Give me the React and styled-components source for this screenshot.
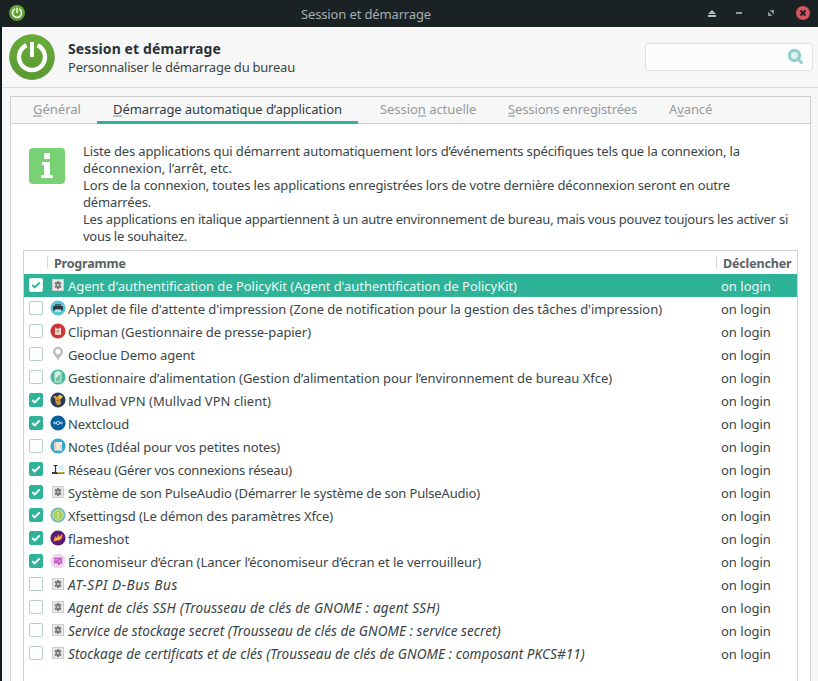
import React from 'react';
import styled, { createGlobalStyle, css } from 'styled-components';

const GlobalStyle = createGlobalStyle`
  * { box-sizing: border-box; }
  html, body { margin: 0; height: 681px; overflow: hidden; }
  body {
    background: #f7f7f7;
    color: #3a4548;
    font: 13px/17px "Noto Sans", "Open Sans", sans-serif;
  }
`;

const Text = styled.span`
  display: block;
  white-space: pre;
  letter-spacing: ${(p) => p.$track || 0}px;
`;

const Window = styled.div`
  display: flex;
  flex-direction: column;
  width: 818px;
  height: 681px;
  overflow: hidden;
  background: #f7f7f7;
`;

const TitleBar = styled.header`
  display: grid;
  grid-template-columns: 301px 1fr auto;
  align-items: center;
  flex: none;
  height: 27px;
  padding: 0 8px 0 0;
  background: #1b2224;
  color: #a5adb2;
`;

const TitleIcon = styled.div`
  display: flex;
  padding-left: 9px;
  margin-top: -1px;
`;

const TitleText = styled(Text)`
  padding-top: 2px;
`;

const WindowControls = styled.svg`
  display: block;
  width: 106px;
  height: 27px;
`;

const Body = styled.div`
  display: flex;
  flex-direction: column;
  flex: 1;
  min-height: 0;
  border-left: 2px solid #101a1e;
`;

const Heading = styled.section`
  display: flex;
  align-items: center;
  flex: none;
  height: 61px;
  padding: 0 5px 0 7px;
  border-bottom: 1px solid #dcdcdc;
`;

const HeadingText = styled.div`
  flex: 1;
  padding: 1px 0 0 13px;
`;

const Name = styled(Text)`
  color: #293236;
  font-size: 14px;
  font-weight: 700;
  line-height: 19px;
`;

const Summary = styled(Text)`
  line-height: 19px;
`;

const Search = styled.div`
  display: flex;
  align-items: center;
  justify-content: flex-end;
  width: 168px;
  height: 28px;
  margin-top: -1px;
  padding-right: 8px;
  border: 1px solid #e1e1e1;
  border-radius: 3px;
  background: #fcfcfc;
`;

const Notebook = styled.main`
  display: flex;
  flex-direction: column;
  flex: 1;
  min-height: 0;
  margin: 8px 7px 0 8px;
  border: 1px solid #cfcfcf;
  border-bottom: 0;
  background: #fff;
`;

const Tabs = styled.nav`
  display: flex;
  gap: 6px;
  flex: none;
  height: 27px;
  padding-left: 6px;
  background: #f7f7f7;
  box-shadow: inset 0 -1px #cfcfcf;
`;

const Tab = styled.div`
  width: ${(p) => p.$width}px;
  padding: 4px 0 0 16px;
  color: #959a9c;
  ${(p) => p.$active && css`
    color: #333e41;
    border-bottom: 3px solid #2eb398;
  `}
`;

const Mnemonic = styled.span`
  background: linear-gradient(#bfc2c3, #bfc2c3) 0 15px / 100% 2px no-repeat;
`;

const Notice = styled.section`
  display: flex;
  flex: none;
  height: 126px;
  padding: 19px 0 0 18px;
`;

const NoticeIcon = styled.svg`
  flex: none;
  width: 36px;
  height: 36px;
  margin: 5px 18px 0 0;
`;

const Table = styled.section`
  flex: 1;
  margin: 0 12px;
  border: 1px solid #d3d3d3;
  border-bottom: 0;
`;

const TableHead = styled.div`
  display: grid;
  grid-template-columns: 23px 669px 1fr;
  align-items: center;
  height: 23px;
  color: #596164;
  font-size: 12.5px;
  font-weight: 700;
`;

const HeadCell = styled.div`
  height: 13px;
  padding-left: 6px;
  border-left: ${(p) => (p.$plain ? 0 : '1px solid #d9dbdb')};
  line-height: 15px;
`;

const Row = styled.div`
  display: grid;
  grid-template-columns: 21px 23px 653px 1fr;
  align-items: center;
  height: 23px;
  color: ${(p) => (p.$selected ? '#eefaf7' : '#3a4548')};
  background: ${(p) => (p.$selected ? '#2eb398' : 'transparent')};
`;

const RowText = styled(Text)`
  padding-top: 1px;
  ${(p) => p.$italic && css`
    padding: 0 0 1px;
    font-style: italic;
    font-size: 13.6px;
    color: #374245;
  `}
`;

const Check = styled.span`
  display: flex;
  width: 14px;
  height: 14px;
  margin: -1px 0 0 5px;
  align-items: center;
  justify-content: center;
  border: 1px solid ${(p) => (p.$on ? '#2eb398' : '#b5cfca')};
  border-radius: 2px;
  background: ${(p) => (p.$on ? '#2eb398' : '#fff')};
  ${(p) => p.$selected && css`
    border: 1px dashed #d4f0ea;
    background: #fff;
  `}
`;

const IconSlot = styled.span`
  display: flex;
  margin: -1px 0 0 5px;
`;

const glyphs = {
  gear: (
    <>
      <rect x="2.5" y="2.5" width="11" height="11" fill="#e9e9e9" stroke="#cdcdcd" />
      <path d="M7 4h2v1.3l1.5-.6 1 1.7L10.4 7.4v1.2l1.1 1-1 1.7-1.5-.6V12H7v-1.3l-1.5.6-1-1.7 1.1-1V7.4l-1.1-1 1-1.7 1.5.6z" fill="#7a7a7a" />
      <circle cx="8" cy="8" r="1.1" fill="#d5d5d5" />
    </>
  ),
  printer: (
    <>
      <circle cx="8" cy="8" r="7.6" fill="#5bc5d3" />
      <path d="M5 4h6v2.5H5z" fill="#486773" />
      <rect x="3" y="6" width="10" height="4.5" rx="1" fill="#263840" />
      <path d="M5 9.3h6V12H5z" fill="#b9dfe7" />
    </>
  ),
  clipboard: (
    <>
      <circle cx="8" cy="8" r="7.6" fill="#d03536" />
      <rect x="5" y="4.7" width="6" height="7" rx=".5" fill="#f1e3d5" />
      <path d="M6.5 4h3v1.7h-3z" fill="#8e4a3c" />
      <path d="M6.5 7h3v2.7h-3z" fill="#cfa097" />
    </>
  ),
  pin: (
    <>
      <path d="M8 .8a5 5 0 0 0-5 5C3 9 7 11 8 15c1-4 5-6 5-9.2a5 5 0 0 0-5-5z" fill="#bdbdbd" />
      <circle cx="8" cy="5.6" r="2.6" fill="#fff" />
    </>
  ),
  battery: (
    <>
      <circle cx="8" cy="8" r="7.6" fill="#4db8a0" />
      <rect x="4.5" y="3" width="7" height="10.5" rx="1" fill="#d6eee5" />
      <path d="M6.5 2h3v1h-3z" fill="#d6eee5" />
      <path d="M5.5 9.5 10.5 5v7.5h-5z" fill="#78c5a9" />
    </>
  ),
  mole: (
    <>
      <circle cx="8" cy="8" r="7" fill="#233b5c" stroke="#1b304d" />
      <path d="m3 4.5 2-.7 2 1 2.5-1 2 2-1.2 1 .5 5.5-3.3 1-2-3-.3-3.3z" fill="#d99838" />
      <path d="M8 4.5c1-2.2 4-1.8 4.6.5l-1.6 2z" fill="#f7cf46" />
      <path d="m6.5 8 2 .3-.2 2z" fill="#79471f" />
    </>
  ),
  cloud: (
    <>
      <circle cx="8" cy="8" r="7.6" fill="#07609f" />
      <g fill="none" stroke="#d9ebf5" strokeWidth=".9">
        <circle cx="8" cy="8" r="1.6" />
        <circle cx="4.6" cy="8" r=".9" />
        <circle cx="11.4" cy="8" r=".9" />
      </g>
    </>
  ),
  notes: (
    <>
      <circle cx="8" cy="8" r="7.6" fill="#39a7cb" />
      <path d="M4 4h8v8.5H4z" fill="#f5eee4" />
      <path d="M4 4h2.5v8.5H4z" fill="#dbcfc1" />
      <path d="M9 7h3v5.5H9z" fill="#e3dace" />
    </>
  ),
  network: (
    <>
      <path d="M8 6.5 13.5 2v9z" fill="#d4eef7" />
      <path d="M3.5 4.5h4M5.5 4v7" stroke="#323232" strokeWidth="1.2" />
      <path d="M2 11h6v2H2z" fill="#3a3a3a" />
      <path d="M8 11h6.5v2H8z" fill="#878776" />
      <path d="M7 11.5h1.5M10 11.5h1M12 11.5h1" stroke="#dfcb43" />
    </>
  ),
  settings: (
    <>
      <circle cx="8" cy="8" r="7.6" fill="#71b9bd" />
      <circle cx="8" cy="8" r="5.2" fill="#a7ce5c" stroke="#d7e3a4" />
      <path d="M8 5v6" stroke="#d0e497" strokeWidth="1.4" />
    </>
  ),
  flame: (
    <>
      <circle cx="8" cy="8" r="7.6" fill="#5b1a73" />
      <path d="M4 12c-.8-2.8.2-4.4 2-6l.3 1.8L9 4v2.5L12.5 4c-.2 2 .4 3.4-1.5 5.3C9 11.5 6 9.8 4 12z" fill="#f18d38" />
      <path d="M5 10.5 6.2 8l1 1L9 6.5v2l2.4-1.8C10.5 9.5 7.5 9.7 5 10.5z" fill="#ffd04a" />
    </>
  ),
  screen: (
    <>
      <circle cx="8" cy="8" r="7.6" fill="#edd5ec" />
      <path d="M4 4.5h8.2v6H10V12H8v-1.5H4z" fill="#c466c4" />
      <path d="M5.3 6h2v1.2h-2zM8.7 7.5h2v1.3h-2z" fill="#e2abe0" />
    </>
  ),
};

function ProgramIcon({ name }) {
  return <svg width="16" height="16" viewBox="0 0 16 16">{glyphs[name]}</svg>;
}

function PowerIcon({ size }) {
  return (
    <svg width={size} height={size} viewBox="0 0 46 46">
      <defs>
        <linearGradient id={`power${size}`} x2="0" y2="1">
          <stop stopColor="#69ad3a" />
          <stop offset="1" stopColor="#5a9831" />
        </linearGradient>
      </defs>
      <circle cx="23" cy="23.3" r="22.7" fill="#447e28" opacity=".65" />
      <circle cx="23" cy="22.8" r="22.6" fill={`url(#power${size})`} />
      <path d="M17.5 11.2a13 13 0 1 0 11 0" fill="none" stroke="#fff" strokeWidth="4.4" />
      <path d="M23 8v15" stroke="#fff" strokeWidth="4" />
    </svg>
  );
}

const tabs = [
  { before: '', key: 'G', after: 'énéral', width: 74, track: 0 },
  { before: '', key: 'D', after: 'émarrage automatique d’application', width: 261, track: -0.09, active: true },
  { before: 'Sessio', key: 'n', after: ' actuelle', width: 122, track: -0.05 },
  { before: '', key: 'S', after: 'essions enregistrées', width: 155, track: -0.13 },
  { before: 'A', key: 'v', after: 'ancé', width: 74, track: -0.1 },
];

const notice = [
  ['Liste des applications qui démarrent automatiquement lors d’événements spécifiques tels que la connexion, la', -0.14],
  ['déconnexion, l’arrêt, etc.', 0],
  ['Lors de la connexion, toutes les applications enregistrées lors de votre dernière déconnexion seront en outre', -0.15],
  ['démarrées.', -0.16],
  ['Les applications en italique appartiennent à un autre environnement de bureau, mais vous pouvez toujours les activer si', -0.231],
  ['vous le souhaitez.', -0.25],
];

const programs = [
  { icon: 'gear', name: "Agent d'authentification de PolicyKit (Agent d'authentification de PolicyKit)", track: -0.039, on: true, selected: true },
  { icon: 'printer', name: "Applet de file d'attente d'impression (Zone de notification pour la gestion des tâches d'impression)", track: -0.049 },
  { icon: 'clipboard', name: 'Clipman (Gestionnaire de presse-papier)', track: -0.064 },
  { icon: 'pin', name: 'Geoclue Demo agent', track: -0.09 },
  { icon: 'battery', name: 'Gestionnaire d’alimentation (Gestion d’alimentation pour l’environnement de bureau Xfce)', track: -0.035 },
  { icon: 'mole', name: 'Mullvad VPN (Mullvad VPN client)', track: 0.02, on: true },
  { icon: 'cloud', name: 'Nextcloud', track: -0.11, on: true },
  { icon: 'notes', name: 'Notes (Idéal pour vos petites notes)', track: -0.133 },
  { icon: 'network', name: 'Réseau (Gérer vos connexions réseau)', track: -0.22, on: true },
  { icon: 'gear', name: 'Système de son PulseAudio (Démarrer le système de son PulseAudio)', track: -0.155, on: true },
  { icon: 'settings', name: 'Xfsettingsd (Le démon des paramètres Xfce)', track: -0.086, on: true },
  { icon: 'flame', name: 'flameshot', track: -0.04, on: true },
  { icon: 'screen', name: 'Économiseur d’écran (Lancer l’économiseur d’écran et le verrouilleur)', track: -0.068, on: true },
  { icon: 'gear', name: 'AT-SPI D-Bus Bus', track: 0.58, italic: true },
  { icon: 'gear', name: 'Agent de clés SSH (Trousseau de clés de GNOME : agent SSH)', track: 0.165, italic: true },
  { icon: 'gear', name: 'Service de stockage secret (Trousseau de clés de GNOME : service secret)', track: 0.02, italic: true },
  { icon: 'gear', name: 'Stockage de certificats et de clés (Trousseau de clés de GNOME : composant PKCS#11)', track: 0.04, italic: true },
];

function ProgramRow({ icon, name, track, on, selected, italic }) {
  return (
    <Row $selected={selected}>
      <Check $on={on} $selected={selected}>
        {on && (
          <svg width="10" height="10" viewBox="0 0 10 10">
            <path d="m1.3 5 2.4 2.4 5-5" fill="none" stroke={selected ? '#2eb398' : '#fff'} strokeWidth="2" />
          </svg>
        )}
      </Check>
      <IconSlot><ProgramIcon name={icon} /></IconSlot>
      <RowText $track={track} $italic={italic}>{name}</RowText>
      <RowText>on login</RowText>
    </Row>
  );
}

export default function App() {
  return (
    <Window>
      <GlobalStyle />
      <TitleBar>
        <TitleIcon><PowerIcon size={16} /></TitleIcon>
        <TitleText $track={-0.14}>Session et démarrage</TitleText>
        <WindowControls viewBox="0 0 106 27">
          <path d="M4 14 8 10l4 4zM4 15h8v2H4z" fill="#b3bcc0" />
          <path d="M32 12h6v2h-6z" fill="#929b9f" />
          <path d="M65.5 10H70v4.5zM64 11.5l4.5 4.5H64z" fill="#8c9599" />
          <circle cx="99" cy="13" r="7" fill="#d6545e" />
          <path d="m96.5 10.5 5 5m0-5-5 5" stroke="#1b2224" strokeWidth="1.9" />
        </WindowControls>
      </TitleBar>
      <Body>
        <Heading>
          <PowerIcon size={46} />
          <HeadingText>
            <Name $track={0.1}>Session et démarrage</Name>
            <Summary $track={-0.24}>Personnaliser le démarrage du bureau</Summary>
          </HeadingText>
          <Search>
            <svg width="17" height="17" viewBox="0 0 17 17">
              <circle cx="7.5" cy="7.5" r="5.1" fill="#e2f2f0" stroke="#93d0ca" strokeWidth="3.2" />
              <path d="m11 11 3.5 3.5" stroke="#93d0ca" strokeWidth="3" strokeLinecap="round" />
            </svg>
          </Search>
        </Heading>
        <Notebook>
          <Tabs>
            {tabs.map((t) => (
              <Tab key={t.after} $width={t.width} $active={t.active}>
                <Text $track={t.track}>{t.before}<Mnemonic>{t.key}</Mnemonic>{t.after}</Text>
              </Tab>
            ))}
          </Tabs>
          <Notice>
            <NoticeIcon viewBox="0 0 36 36">
              <rect width="36" height="36" rx="4" fill="#79d175" />
              <path d="M15 5h6v6h-6zM13 14h8v13h3v3H12v-3h3V17h-2z" fill="#fff" />
            </NoticeIcon>
            <div>
              {notice.map(([line, track]) => <Text key={line} $track={track}>{line}</Text>)}
            </div>
          </Notice>
          <Table>
            <TableHead>
              <HeadCell $plain />
              <HeadCell><Text $track={-0.2}>Programme</Text></HeadCell>
              <HeadCell><Text $track={-0.16}>Déclencher</Text></HeadCell>
            </TableHead>
            {programs.map((p) => <ProgramRow key={p.name} {...p} />)}
          </Table>
        </Notebook>
      </Body>
    </Window>
  );
}
